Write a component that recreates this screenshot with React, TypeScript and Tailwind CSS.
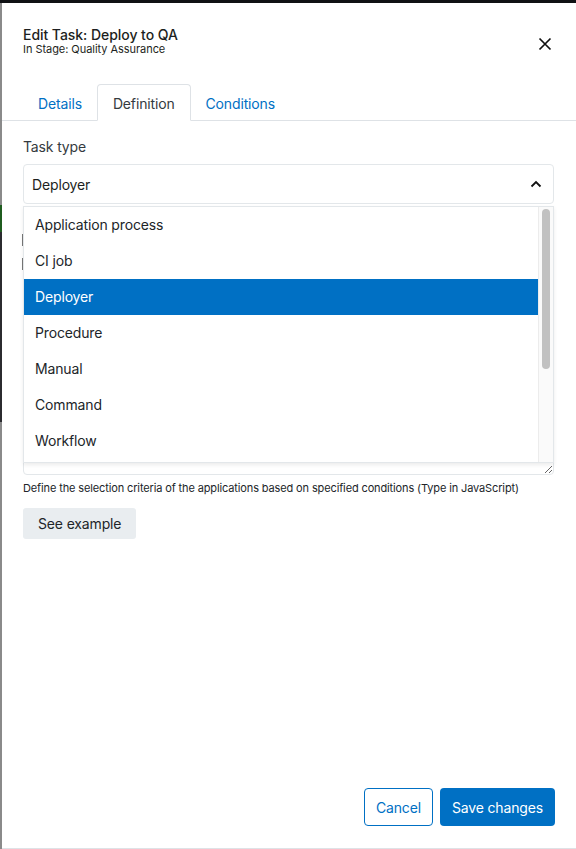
import React from "react";

const options = ["Application process", "CI job", "Deployer", "Procedure", "Manual", "Command", "Workflow"];

export default function App() {
  return (
    <div className="w-[576px] h-[849px] flex flex-col bg-white overflow-hidden text-[#212529] tracking-[-0.15px]" style={{ fontFamily: 'Inter, "Liberation Sans", Arial, sans-serif' }}>
      <div className="h-[3px] bg-[#101114] shrink-0" />
      <div className="flex-1 flex min-h-0">
        <div className="w-[2px] flex flex-col shrink-0">
          <div className="h-[202px] bg-[#8a8a8a]" />
          <div className="h-[27px] bg-[#1f5c1f]" />
          <div className="h-[190px] bg-[#2b2b2f]" />
          <div className="flex-1 bg-[#8a8a8a]" />
        </div>
        <div className="flex-1 flex flex-col border-b border-[#dee2e6] min-w-0">
          {/* Header */}
          <div className="flex items-start justify-between pl-[21px] pr-[22px] pt-[23px] h-[81px]">
            <div className="flex flex-col">
              <div className="text-[14px] leading-[17px] font-medium text-[#1d1f21] tracking-[-0.05px]">Edit Task: Deploy to QA</div>
              <div className="text-[11px] leading-[13px] text-[#1d1f21] tracking-[-0.05px]">In Stage: Quality Assurance</div>
            </div>
            <button className="mt-[10px] mr-[1px] w-[16px] h-[16px] flex items-center justify-center text-[#111]">
              <svg width="14" height="14" viewBox="0 0 14 14" fill="none" stroke="currentColor" strokeWidth="1.7">
                <path d="M1.5 1.5 L12.5 12.5 M12.5 1.5 L1.5 12.5" />
              </svg>
            </button>
          </div>
          {/* Tabs */}
          <div className="flex border-b border-[#dee2e6] pl-[21px] h-[37px] items-end">
            <div className="h-[36px] pt-[2px] px-[15px] flex items-center text-[14px] text-[#0070c4]">Details</div>
            <div className="h-[37px] -mb-[1px] pt-[2px] px-[15px] flex items-center text-[14px] text-[#343a40] bg-white border border-[#dee2e6] border-b-white rounded-t-[4px]">Definition</div>
            <div className="h-[36px] pt-[2px] px-[15px] flex items-center text-[14px] text-[#0070c4]">Conditions</div>
          </div>
          {/* Body */}
          <div className="flex-1 flex flex-col pl-[21px] pr-[22px] pt-[17px]">
            <div className="text-[14px] leading-[17px] text-[#343a40]">Task type</div>
            <div className="relative mt-[9px]">
              <div className="h-[40px] border border-[#e3e7ea] rounded-[4px] flex items-center justify-between pl-[8px] pr-[11px]">
                <span className="text-[14px] text-[#1d1f21]">Deployer</span>
                <svg width="12" height="8" viewBox="0 0 12 8" fill="none" stroke="#111" strokeWidth="1.8">
                  <path d="M1.5 6.5 L6 2 L10.5 6.5" />
                </svg>
              </div>
              {/* Dropdown menu */}
              <div className="absolute left-0 right-0 top-[42px] h-[257px] bg-white border border-[#e3e7ea] shadow-[0_2px_4px_rgba(0,0,0,0.08)] z-10 flex">
                <div className="flex-1 flex flex-col border-r border-[#ececec]">
                  {options.map((o) => (
                    <div key={o} className={"h-[36px] shrink-0 flex items-center pl-[11px] pb-[1px] text-[14px] " + (o === "Deployer" ? "bg-[#0070c4] text-white" : "text-[#212529]")}>{o}</div>
                  ))}
                </div>
                <div className="w-[14px] bg-[#fafafa] pt-[2px] flex justify-center">
                  <div className="w-[8px] h-[160px] rounded-full bg-[#c1c1c1]" />
                </div>
              </div>
              {/* Content hidden below menu */}
              <div className="mt-[30px] -ml-[1px] h-[12px] w-[1px] bg-[#777]" />
              <div className="mt-[12px] -ml-[1px] h-[12px] w-[1px] bg-[#777]" />
              <textarea className="mt-[8px] w-full h-[197px] border border-[#e3e7ea] rounded-[4px] resize-y block" />
            </div>
            <div className="mt-[7px] text-[11px] leading-[13px] text-[#212529] tracking-[-0.13px]">Define the selection criteria of the applications based on specified conditions (Type in JavaScript)</div>
            <div className="mt-[13px]">
              <button className="h-[31px] px-[15px] bg-[#e9edf0] rounded-[3px] text-[14px] text-[#212529]">See example</button>
            </div>
            <div className="flex-1" />
            <div className="flex justify-end gap-[7px] pb-[22px] -mr-[1px]">
              <button className="h-[38px] px-[11px] border border-[#0070c4] rounded-[4px] text-[14px] text-[#0070c4] bg-white">Cancel</button>
              <button className="h-[38px] px-[12px] rounded-[4px] text-[14px] text-white bg-[#0070c4]">Save changes</button>
            </div>
          </div>
        </div>
      </div>
    </div>
  );
}
